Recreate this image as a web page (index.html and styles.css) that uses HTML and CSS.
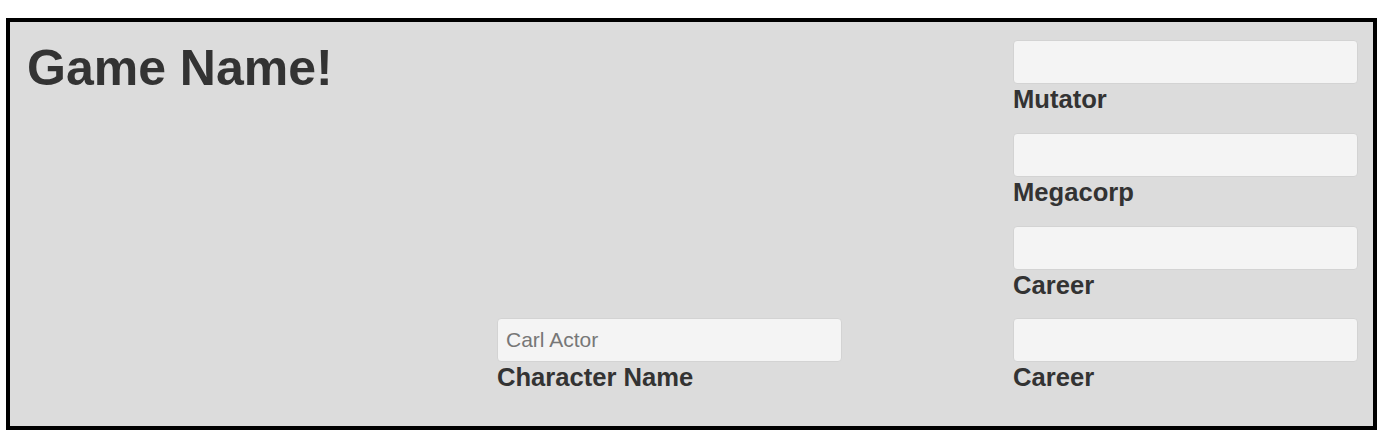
FILE: index.html
```html
<!DOCTYPE html>
<html>
<head>
<meta charset="utf-8">
<title>Game</title>
<link rel="stylesheet" href="styles.css">
</head>
<body>
<div class="sheet">
  <div class="title-col">
    <h1 class="title">Game Name!</h1>
  </div>
  <div class="mid-col">
    <div class="field">
      <input class="text-input" type="text" placeholder="Carl Actor">
      <label class="field-label">Character Name</label>
    </div>
  </div>
  <div class="side-col">
    <div class="field">
      <input class="text-input" type="text">
      <label class="field-label">Mutator</label>
    </div>
    <div class="field">
      <input class="text-input" type="text">
      <label class="field-label">Megacorp</label>
    </div>
    <div class="field">
      <input class="text-input" type="text">
      <label class="field-label">Career</label>
    </div>
    <div class="field">
      <input class="text-input" type="text">
      <label class="field-label">Career</label>
    </div>
  </div>
</div>
</body>
</html>
```

FILE: styles.css
```css
html, body {
  margin: 0;
  padding: 0;
  background: #ffffff;
}

body {
  font-family: "Liberation Sans", Arial, Helvetica, sans-serif;
  color: #333333;
}

.sheet {
  box-sizing: border-box;
  margin: 18px 0 0 6px;
  width: 1371px;
  height: 412px;
  border: 4px solid #000000;
  background: #dcdcdc;
  padding: 18px 15px 0 16px;
  display: grid;
  grid-template-columns: 471px 516px 345px;
  align-items: start;
}

.title-col {
  white-space: nowrap;
}

.title {
  margin: 0 0 0 1px;
  font-size: 50px;
  line-height: 56px;
  font-weight: bold;
  color: #333333;
}

.mid-col {
  align-self: end;
  padding-bottom: 34px;
}

.side-col {
  display: flex;
  flex-direction: column;
}

.field {
  display: flex;
  flex-direction: column;
  width: 345px;
}

.side-col .field {
  margin-bottom: 18.75px;
}

.side-col .field:last-child {
  margin-bottom: 0;
}

.text-input {
  box-sizing: border-box;
  width: 345px;
  height: 44px;
  margin: 0;
  padding: 0 8px;
  border: 1px solid #d3d3d3;
  border-radius: 4px;
  background: #f4f4f4;
  font-family: "Liberation Sans", Arial, Helvetica, sans-serif;
  font-size: 21px;
  color: #555555;
  outline: none;
}

.text-input::placeholder {
  color: #777777;
  opacity: 1;
}

.field-label {
  display: block;
  margin-top: 1px;
  font-size: 25.6px;
  line-height: 29px;
  font-weight: bold;
  color: #333333;
}
```
